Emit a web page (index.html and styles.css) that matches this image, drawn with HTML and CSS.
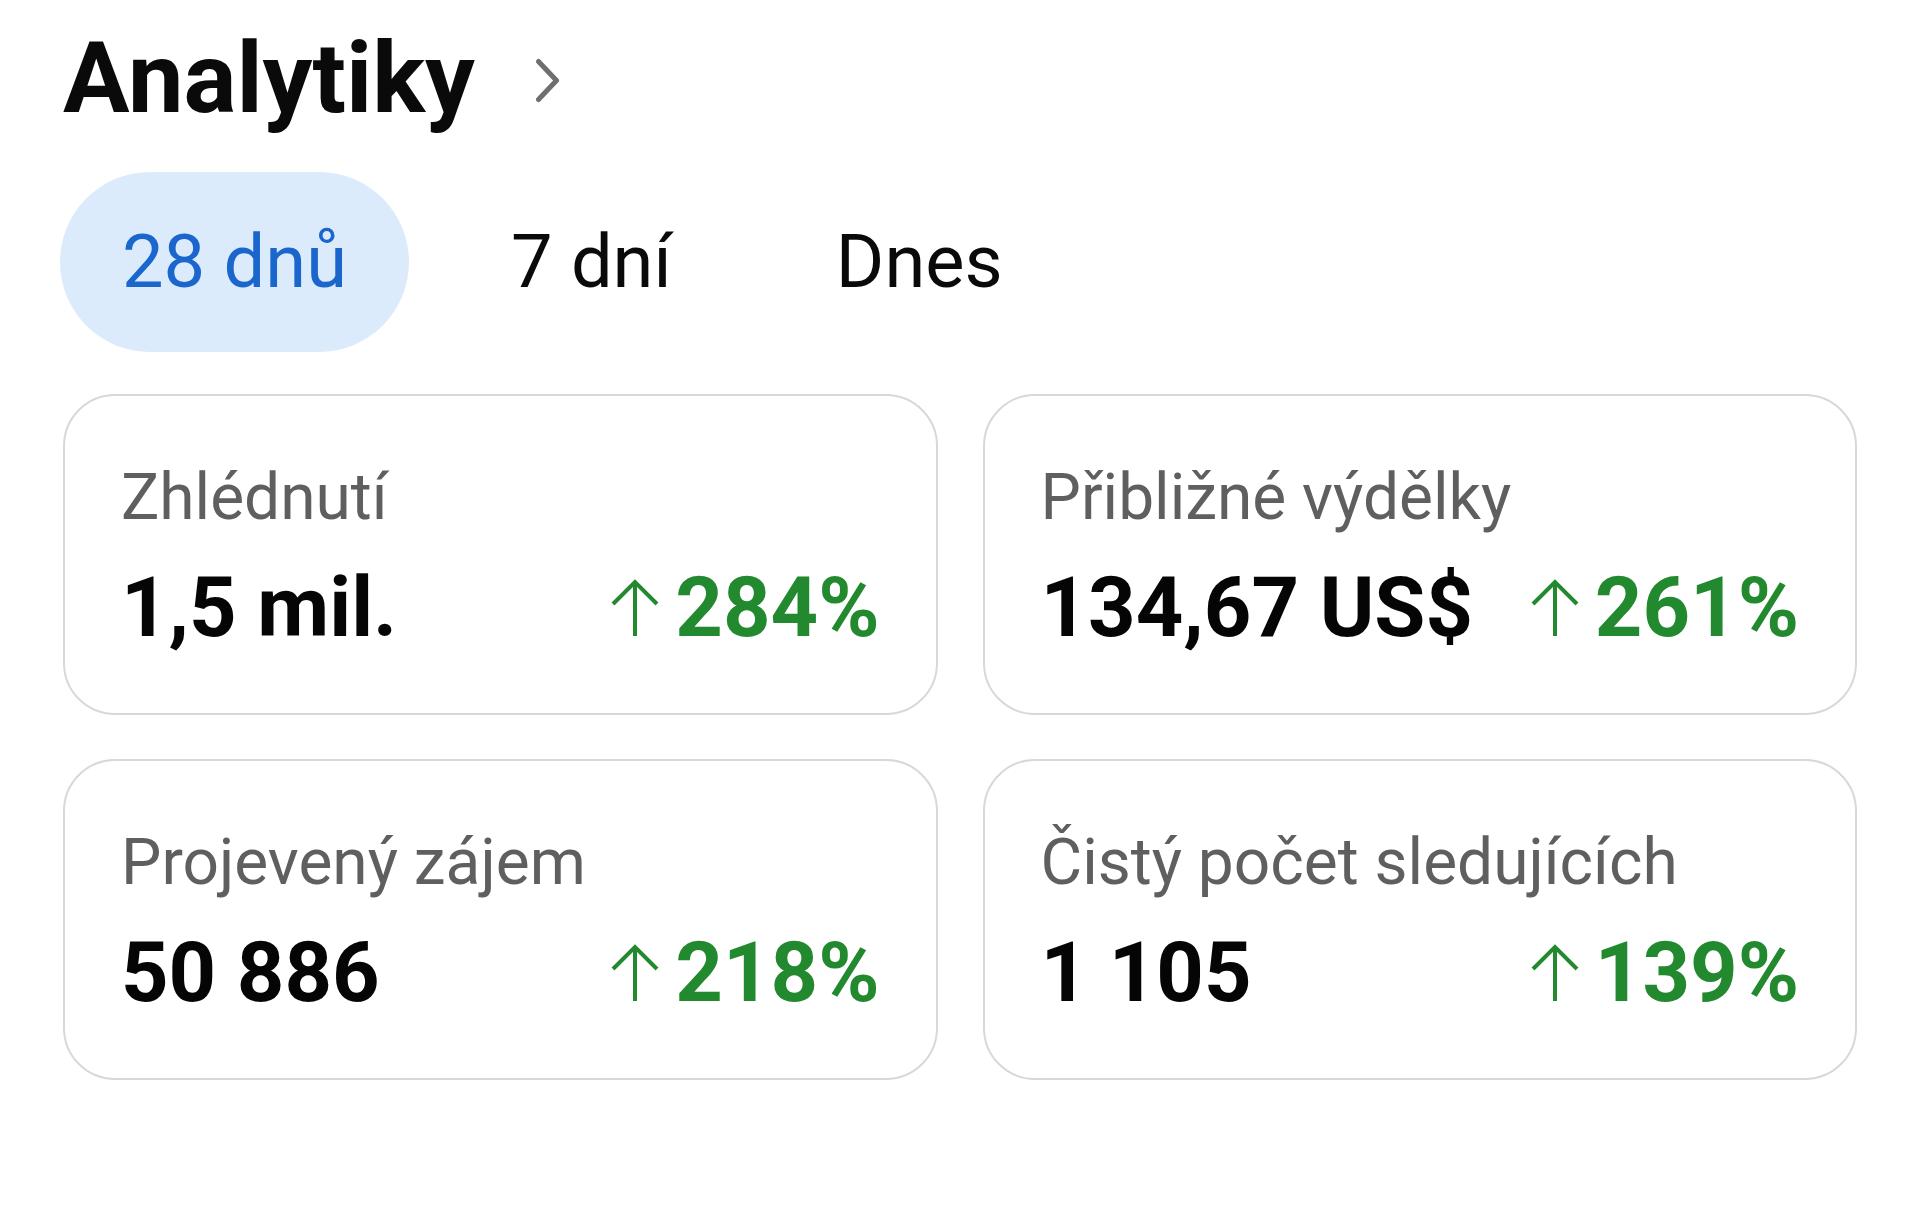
FILE: index.html
```html
<!DOCTYPE html>
<html lang="cs">
<head>
<meta charset="utf-8">
<title>Analytiky</title>
<link rel="stylesheet" href="styles.css">
</head>
<body>
<main class="page">
  <header class="head">
    <h1 class="title">Analytiky</h1>
    <svg class="chev" viewBox="0 0 25 45" aria-hidden="true"><path d="M3.5 3.5 L21.5 22.5 L3.5 41.5"/></svg>
  </header>
  <nav class="tabs">
    <span class="tab active">28 dnů</span>
    <span class="tab">7 dní</span>
    <span class="tab">Dnes</span>
  </nav>
  <section class="grid">
    <div class="card">
      <div class="label">Zhlédnutí</div>
      <div class="row">
        <span class="value">1,5 mil.</span>
        <span class="delta"><svg class="arrow" viewBox="0 0 50 57" aria-hidden="true"><path d="M25 57 V3 M3 25 L25 3 L47 25"/></svg><span>284%</span></span>
      </div>
    </div>
    <div class="card">
      <div class="label">Přibližné výdělky</div>
      <div class="row">
        <span class="value">134,67 US$</span>
        <span class="delta"><svg class="arrow" viewBox="0 0 50 57" aria-hidden="true"><path d="M25 57 V3 M3 25 L25 3 L47 25"/></svg><span>261%</span></span>
      </div>
    </div>
    <div class="card">
      <div class="label">Projevený zájem</div>
      <div class="row">
        <span class="value">50 886</span>
        <span class="delta"><svg class="arrow" viewBox="0 0 50 57" aria-hidden="true"><path d="M25 57 V3 M3 25 L25 3 L47 25"/></svg><span>218%</span></span>
      </div>
    </div>
    <div class="card">
      <div class="label">Čistý počet sledujících</div>
      <div class="row">
        <span class="value">1 105</span>
        <span class="delta"><svg class="arrow" viewBox="0 0 50 57" aria-hidden="true"><path d="M25 57 V3 M3 25 L25 3 L47 25"/></svg><span>139%</span></span>
      </div>
    </div>
  </section>
</main>
</body>
</html>
```

FILE: styles.css
```css
html, body {
  margin: 0;
  padding: 0;
  background: #ffffff;
}

body {
  font-family: Roboto, "Noto Sans", "Liberation Sans", sans-serif;
  color: #0a0a0a;
}

.page {
  padding: 21px 63px 0 63px;
}

.head {
  display: flex;
  align-items: center;
  height: 115px;
}

.title {
  margin: 0;
  font-size: 99px;
  line-height: 115px;
  font-weight: 700;
  color: #0a0a0a;
}

.chev {
  width: 25px;
  height: 45px;
  margin-left: 60px;
  margin-top: 4px;
  fill: none;
  stroke: #6f6f6f;
  stroke-width: 5;
  stroke-linecap: round;
  stroke-linejoin: round;
}

.tabs {
  display: flex;
  gap: 40px;
  margin-top: 36px;
  margin-left: -3px;
}

.tab {
  font-size: 74px;
  line-height: 84px;
  padding: 48px 62px;
  border-radius: 999px;
  color: #0a0a0a;
}

.tab.active {
  background: #dcebfc;
  color: #1a66cc;
}

.grid {
  display: grid;
  grid-template-columns: 1fr 1fr;
  column-gap: 45px;
  row-gap: 44px;
  margin-top: 42px;
}

.card {
  border: 2px solid #d8d8d8;
  border-radius: 52px;
  padding: 64px 56px 57px 56px;
}

.label {
  font-size: 64px;
  line-height: 75px;
  color: #5f5f5f;
  white-space: nowrap;
}

.row {
  display: flex;
  justify-content: space-between;
  align-items: baseline;
  margin-top: 25px;
  font-size: 83px;
  line-height: 96px;
  font-weight: 700;
  white-space: nowrap;
}

.value {
  color: #050505;
}

.delta {
  display: flex;
  align-items: baseline;
  color: #22892e;
}

.arrow {
  width: 50px;
  height: 57px;
  margin-right: 15px;
  fill: none;
  stroke: #22892e;
  stroke-width: 4;
  stroke-linecap: butt;
  stroke-linejoin: miter;
}
```
